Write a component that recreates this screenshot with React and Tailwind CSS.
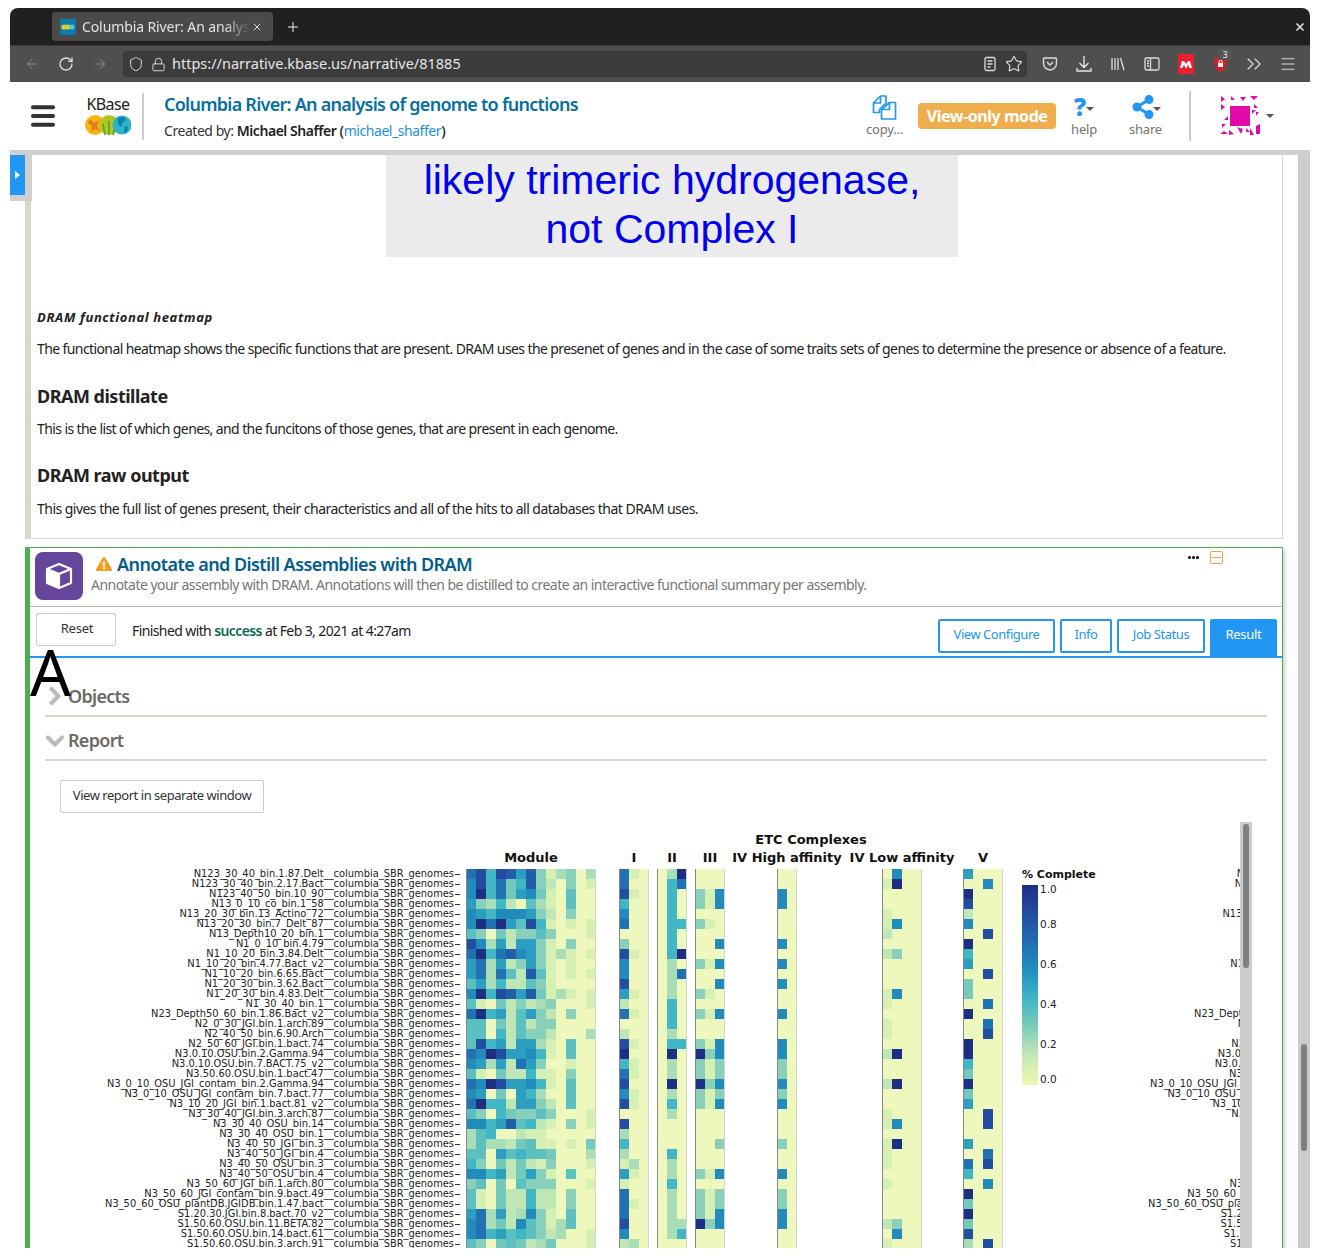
import React from 'react';
import { ArrowLeft, ArrowRight, RotateCw, Shield, Lock, Star, Plus, X, Menu, ChevronsRight, ChevronRight, ChevronDown } from 'lucide-react';
import { FaShareAlt, FaExclamationTriangle } from 'react-icons/fa';

const PALETTE = {
  a: '#eef8bd', b: '#d6efb3', c: '#bfe6b5', d: '#a8ddb5', e: '#88d0ba', f: '#74c9bd', g: '#5cc0c0',
  h: '#41b6c4', i: '#2c9fc0', j: '#218bbb', k: '#2072b2', l: '#225ea8', m: '#234da0', n: '#1d2e83',
};

const LABELS = [
  'N123_30_40_bin.1.87.Delt', 'N123_30_40_bin.2.17.Bact', 'N123_40_50_bin.10_90', 'N13_0_10_co_bin.1_58',
  'N13_20_30_bin.13_Actino_72', 'N13_20_30_bin.7_Delt_87', 'N13_Depth10_20_bin.1', 'N1_0_10_bin.4.79',
  'N1_10_20_bin.3.84.Delt', 'N1_10_20_bin.4.77.Bact_v2', 'N1_10_20_bin.6.65.Bact', 'N1_20_30_bin.3.62.Bact',
  'N1_20_30_bin.4.83.Delt', 'N1_30_40_bin.1', 'N23_Depth50_60_bin.1.86.Bact_v2', 'N2_0_30_JGI.bin.1.arch.89',
  'N2_40_50_bin.6.90.Arch', 'N2_50_60_JGI.bin.1.bact.74', 'N3.0.10.OSU.bin.2.Gamma.94', 'N3.0.10.OSU.bin.7.BACT.75_v2',
  'N3.50.60.OSU.bin.1.bact.47', 'N3_0_10_OSU_JGI_contam_bin.2.Gamma.94', 'N3_0_10_OSU_JGI_contam_bin.7.bact.77',
  'N3_10_20_JGI_bin.1.bact.81_v2', 'N3_30_40_JGI.bin.3.arch.87', 'N3_30_40_OSU_bin.14', 'N3_30_40_OSU_bin.1',
  'N3_40_50_JGI_bin.3', 'N3_40_50_JGI_bin.4', 'N3_40_50_OSU_bin.3', 'N3_40_50_OSU_bin.4', 'N3_50_60_JGI_bin.1.arch.80',
  'N3_50_60_JGI_contam_bin.9.bact.49', 'N3_50_60_OSU_plantDB.JGIDB.bin.1.47.bact', 'S1.20.30.JGI.bin.8.bact.70_v2',
  'S1.50.60.OSU.bin.11.BETA.82', 'S1.50.60.OSU.bin.14.bact.61', 'S1.50.60.OSU.bin.3.arch.91',
];

const MODULE = [
  'kmhmlilebdead', 'jmhkfhlecaeab', 'jnhkfijfbagaa', 'iedhcagdbagaa', 'jihjjjiecaeaa', 'jnknigmhbabab',
  'geafceegeaaab', 'mjdiciiebaeaa', 'knhkljiebdbab', 'ikdiceiebabaa', 'ikdkgclgbabab',
  'gidhccgebaaaa', 'jnhmlilfbdbab', 'gbafcecdeaaab', 'knhicgiecaeaa', 'ggafcgceeaaaa', 'ggahcgeecaaad',
  'gmhiciidbagaa', 'kjnmiijhbagaa', 'jidickieaabaa', 'gbafcchbbaeaa', 'kjnmiijhbagaa', 'jiafaihdaagaa',
  'knhhciiecagaa', 'geahfeegeaaab', 'jjhilghcbaeab', 'dghaacbbaaaaa', 'dgddcfgbbabaf', 'ggaighggfaaad',
  'heafcfcbeaaab', 'jjhicfiebagaa', 'egafageeeaaab', 'gbafcchccaeaa', 'gbafcchccaeaa', 'ikdicdjebagaa',
  'jkdfcjgebdgaa', 'jkhighgecdaab', 'geafgfcdfaaab',
];
const COMPLEX_I = ['kba', 'kaa', 'mba', 'haa', 'jaa', 'kaa', 'aaa', 'eaa', 'mba', 'jaa', 'jaa', 'maa', 'iba', 'caa', 'kba', 'aaa', 'caa', 'mba', 'naa', 'hba', 'kba', 'maa', 'jba', 'mba', 'aaa', 'maa', 'daa', 'haa', 'daa', 'bda', 'iba', 'baa', 'kaa', 'kba', 'kaa', 'maa', 'jaa', 'cda'];
const COMPLEX_II = ['adn', 'ahk', 'aha', 'aha', 'aha', 'ahh', 'aha', 'aha', 'ahn', 'ada', 'adk', 'ada', 'ada', 'aha', 'aha', 'aha', 'ada', 'ahh', 'ana', 'ada', 'ada', 'ana', 'ada', 'aha', 'ada', 'aaa', 'aaa', 'aaa', 'aha', 'ada', 'ada', 'aha', 'ada', 'ada', 'ada', 'add', 'adh', 'aaa'];
const COMPLEX_III = ['aaa', 'aaa', 'ebj', 'ebj', 'aaa', 'eba', 'aaa', 'aaj', 'aaa', 'ebj', 'aaa', 'aaj', 'eba', 'aaa', 'ebj', 'aaa', 'aaa', 'ebj', 'nej', 'ebe', 'ebe', 'nej', 'ebe', 'ebj', 'aaa', 'aaa', 'aaa', 'aae', 'aaa', 'aaa', 'ebj', 'aaa', 'ebe', 'ebe', 'ebj', 'nej', 'aaa', 'aaa'];
const IV_HIGH = ['aa', 'aa', 'ja', 'ja', 'aa', 'aa', 'aa', 'ja', 'aa', 'ja', 'aa', 'ja', 'aa', 'aa', 'ja', 'aa', 'aa', 'ja', 'ja', 'ea', 'ea', 'ja', 'ea', 'ja', 'aa', 'aa', 'aa', 'ea', 'aa', 'aa', 'ja', 'aa', 'ea', 'ea', 'ja', 'ja', 'aa', 'aa'];
const IV_LOW = ['ajaa', 'bnaa', 'aaaa', 'aaaa', 'baaa', 'bjaa', 'caaa', 'aaaa', 'ceaa', 'aaaa', 'aaaa', 'aaaa', 'bjaa', 'baaa', 'aaaa', 'baaa', 'baaa', 'aaaa', 'cnaa', 'aaaa', 'aaaa', 'cnaa', 'aaaa', 'aaaa', 'baaa', 'bjaa', 'aaaa', 'bnaa', 'baaa', 'baaa', 'aaaa', 'baaa', 'aaaa', 'aaaa', 'aaaa', 'ceaa', 'ajaa', 'baaa'];
const COMPLEX_V = ['iaaa', 'aaja', 'naaa', 'maaa', 'caaa', 'jaaa', 'aama', 'naaa', 'haaa', 'iaaa', 'aama', 'faaa', 'faaa', 'aaka', 'naaa', 'aaka', 'aama', 'naaa', 'naaa', 'haaa', 'faaa', 'naaa', 'faaa', 'iaaa', 'aama', 'aama', 'aaaa', 'iaaa', 'aaka', 'kama', 'haaa', 'aaja', 'naaa', 'faaa', 'naaa', 'faaa', 'maaa', 'dama'];

// one block of the heatmap, a drawing of coloured cells with its title above
const HeatBlock = ({ title, rows }) => {
  const cols = rows[0].length;
  return (
    <div className="flex flex-col items-center shrink-0">
      <div className="h-[14px] w-0 flex justify-center items-center whitespace-nowrap text-[13px] font-bold leading-none text-[#111] mb-[5px]">{title}</div>
      <svg width={cols * 10} height={380} className="block shrink-0" shapeRendering="crispEdges">
        {rows.map((row, y) =>
          row.split('').map((c, x) => <rect key={x + '-' + y} x={x * 10} y={y * 10} width={10} height={10} fill={PALETTE[c]} />)
        )}
        <rect x={0} y={0} width={1} height={380} fill="#888888" />
        <rect x={cols * 10 - 1} y={0} width={1} height={380} fill="#d4d4d4" />
      </svg>
    </div>
  );
};

const LabelColumn = () => (
  <div className="w-[415px] shrink-0 flex flex-col items-end pt-[47px] text-[9.9px] leading-[10px] text-[#222]">
    {LABELS.map((l) => (
      <div key={l} className="h-[10px] flex items-center whitespace-nowrap">
        <span>{l}__columbia_SBR_genomes</span>
        <span className="ml-[1px] w-[5px] h-px bg-[#333] shrink-0" />
      </div>
    ))}
  </div>
);

const ColorBar = () => (
  <div className="w-[66px] shrink-0 pt-[47px] ml-[19px]">
    <div className="text-[11px] font-bold leading-[12px] text-[#111] whitespace-nowrap">% Complete</div>
    <div className="flex mt-[4px]">
      <div className="w-[16px] h-[200px] bg-[linear-gradient(to_bottom,#1f2f86,#234da0,#216daf,#2091c0,#41b6c4,#7fcdbb,#c7e9b4,#edf8b1)]" />
      <div className="ml-[2px] -mt-[2px] text-[10.5px] leading-[12px] text-[#222] flex flex-col">
        <span className="h-[12px]">1.0</span>
        <span className="h-[12px] mt-[23px]">0.8</span>
        <span className="h-[12px] mt-[28px]">0.6</span>
        <span className="h-[12px] mt-[28px]">0.4</span>
        <span className="h-[12px] mt-[28px]">0.2</span>
        <span className="h-[12px] mt-[23px]">0.0</span>
      </div>
    </div>
  </div>
);

const Heatmap = () => (
  <div className="flex font-['DejaVu_Sans',sans-serif] w-[1195px] overflow-hidden">
    <div className="flex shrink-0">
      <LabelColumn />
      <div className="flex shrink-0 pt-[22px]">
        <div className="ml-[6px] pt-[6px]"><HeatBlock title="Module" rows={MODULE} /></div>
        <div className="ml-[23px] pt-[6px]"><HeatBlock title="I" rows={COMPLEX_I} /></div>
        <div className="ml-[8px] pt-[6px]"><HeatBlock title="II" rows={COMPLEX_II} /></div>
        <div className="ml-[8px] pt-[6px]"><HeatBlock title="III" rows={COMPLEX_III} /></div>
        <div className="ml-[52px] pt-[6px] relative">
          <div className="absolute left-[10px] -top-[11px] w-0 flex justify-center whitespace-nowrap text-[13px] font-bold text-[#111] leading-[14px]">
            <span className="pl-[48px]">ETC Complexes</span>
          </div>
          <HeatBlock title="IV High affinity" rows={IV_HIGH} />
        </div>
        <div className="ml-[85px] pt-[6px]"><HeatBlock title="IV Low affinity" rows={IV_LOW} /></div>
        <div className="ml-[41px] pt-[6px]"><HeatBlock title="V" rows={COMPLEX_V} /></div>
      </div>
      <ColorBar />
    </div>
    <LabelColumn />
  </div>
);

const ChromeIcon = ({ children }) => <div className="w-[16px] h-[16px] flex items-center justify-center text-[#ddd]">{children}</div>;

const BrowserChrome = () => (
  <div className="shrink-0 font-['Noto_Sans',sans-serif]">
    <div className="h-[37px] bg-[#202020] flex items-start relative">
      <div className="ml-[42px] mt-[4px] w-[221px] h-[29px] bg-[#4a4a4a] rounded-[4px] flex items-center pl-[8px]">
        <svg width="16" height="16" viewBox="0 0 16 16" className="shrink-0">
          <rect width="16" height="16" fill="#0a7ab0" />
          <circle cx="4" cy="8" r="2.6" fill="#f9c513" />
          <circle cx="8" cy="8" r="2.6" fill="#c7d536" />
          <circle cx="12" cy="8" r="2.6" fill="#5cc0d0" />
        </svg>
        <span className="ml-[6px] text-[14px] text-[#e2e2e2] w-[168px] overflow-hidden whitespace-nowrap tracking-[-0.1px] [mask-image:linear-gradient(to_right,black_85%,transparent)]">Columbia River: An analysis of genome</span>
        <X size={12} className="text-[#ddd] ml-[1px]" />
      </div>
      <Plus size={16} className="text-[#eee] ml-[12px] mt-[11px]" strokeWidth={1.5} />
      <X size={12} strokeWidth={3.5} className="text-[#ddd] ml-auto mr-[4px] mt-[13px]" />
    </div>
    <div className="h-[37px] bg-[#4f4f4f] border-t border-[#3a3a3a] flex items-center text-[#ddd]">
      <ArrowLeft size={16} strokeWidth={1.5} className="ml-[14px] text-[#8c8c8c]" />
      <RotateCw size={16} strokeWidth={2} className="ml-[18px]" />
      <ArrowRight size={16} strokeWidth={1.5} className="ml-[18px] text-[#8c8c8c]" />
      <div className="ml-[15px] w-[904px] h-[26px] bg-[#3c3c3c] rounded-[4px] flex items-center pl-[5px]">
        <Shield size={16} strokeWidth={1.5} />
        <Lock size={15} strokeWidth={1.5} className="ml-[7px]" />
        <span className="ml-[6px] text-[14.5px] text-[#e6e6e6]">https://narrative.kbase.us/narrative/81885</span>
        <div className="ml-auto mr-[4px] flex items-center gap-[8px]">
          <svg width="14" height="16" viewBox="0 0 14 16" fill="none" stroke="#ddd" strokeWidth="1.3">
            <rect x="2" y="1.5" width="10" height="13" rx="1.5" />
            <path d="M4.5 5h5M4.5 8h5M4.5 11h3" />
          </svg>
          <Star size={18} strokeWidth={1.5} />
        </div>
      </div>
      <div className="ml-[15px] flex items-center gap-[18px]">
        <ChromeIcon>
          <svg width="16" height="16" viewBox="0 0 16 16" fill="none" stroke="#ddd" strokeWidth="1.4">
            <path d="M2.5 2h11a1 1 0 0 1 1 1v4.5a6.5 6.5 0 0 1-13 0V3a1 1 0 0 1 1-1z" />
            <path d="M5 6l3 3 3-3" />
          </svg>
        </ChromeIcon>
        <ChromeIcon>
          <svg width="16" height="18" viewBox="0 0 16 18" fill="none" stroke="#e4e4e4" strokeWidth="1.4" className="shrink-0">
            <path d="M8 1v11M3.500 8L8 12.500 12.500 8M1 13v3h14v-3" />
          </svg>
        </ChromeIcon>
        <ChromeIcon>
          <svg width="16" height="16" viewBox="0 0 16 16" fill="none" stroke="#ddd" strokeWidth="1.3">
            <path d="M2 2v12M5 2v12M8 2v12M10.5 2l3.5 12" />
          </svg>
        </ChromeIcon>
        <ChromeIcon>
          <svg width="16" height="16" viewBox="0 0 16 16" fill="none" stroke="#ddd" strokeWidth="1.3">
            <rect x="1" y="2" width="14" height="12" rx="1.5" />
            <path d="M6.5 2v12M3 5h2M3 7.5h2M3 10h2" />
          </svg>
        </ChromeIcon>
        <div className="w-[16px] h-[20px] bg-[#e8202e] flex items-center justify-center shrink-0">
          <svg width="12" height="8" viewBox="0 0 12 8" fill="#fff">
            <path d="M0 8l2-7h2l2 3 2-3h2l2 7h-2.500L8 4.500 6.500 8h-1L4 4.500 2.500 8z" />
          </svg>
        </div>
        <div className="w-[16px] h-[16px] relative flex items-center justify-center">
          <svg width="15" height="17" viewBox="0 0 15 17" className="shrink-0">
            <path d="M7.500 0.500L14 2.500c0 6-1.500 10.500-6.500 14C2.500 13 1 8.500 1 2.500z" fill="#d81e28" />
            <rect x="5" y="7" width="5" height="4" fill="#fff" />
            <path d="M6 7V5.500a1.500 1.500 0 0 1 3 0V7" fill="none" stroke="#fff" />
          </svg>
          <span className="absolute left-[6px] -top-[7px] w-[14px] h-[11px] rounded-[2px] bg-[#555] text-[9px] leading-[11px] text-center text-[#eee]">3</span>
        </div>
        <ChromeIcon><ChevronsRight size={24} strokeWidth={1.2} className="shrink-0" /></ChromeIcon>
        <ChromeIcon><Menu size={18} strokeWidth={1.5} className="shrink-0" /></ChromeIcon>
      </div>
    </div>
  </div>
);

const Identicon = () => (
  <svg width="42" height="40" viewBox="0 0 42 40" fill="#e20aa8" className="shrink-0">
    <rect x="10" y="10" width="20" height="20" />
    <path d="M1 0l4 3-4 3zM1 8l4 3-4 3zM11 0l4 4h-4zM20 1l6 0-3 4zM30 0h8l-4 4zM34 8l4 4h-4zM36 16l3 0-3 4zM32 14l4 0-4 4zM8 20l-4 4 4 0zM2 28l4 0-4 4zM0 38l8 0-4-3zM9 34l5 4-5 1zM17 31l6 2-2 5zM30 32l4 7-4 0zM26 32l4 4-4 0zM36 30l4-2 0 10-4 0z" />
  </svg>
);

const KBaseLogo = () => (
  <div className="flex flex-col items-center w-[46px]">
    <div className="font-['Noto_Sans',sans-serif] text-[16px] leading-[18px] text-[#222] tracking-[-0.6px]">KBase</div>
    <svg width="46" height="24" viewBox="0 0 46 24">
      <circle cx="10" cy="12" r="10" fill="#f9b60f" />
      <path d="M5 6l4 4 5-3-2 6 3 5-5-2-4 3 1-6-4-3z" fill="#e5791c" />
      <circle cx="24" cy="12" r="10" fill="#b4c61e" />
      <path d="M24 22V8M20 22l-2-11M28 22l3-12" stroke="#4f9e3a" strokeWidth="1.5" fill="none" />
      <circle cx="37" cy="12" r="9.500" fill="#2cb2c9" />
      <path d="M33 5l6-1 2 3-4 3-1 4-3-3zM40 13l3 1-1 5-3 1z" fill="#0d7fa6" />
    </svg>
  </div>
);

const HeaderAction = ({ icon, label }) => (
  <div className="flex flex-col items-center pb-[2px]">
    <div className="h-[28px] flex items-center">{icon}</div>
    <div className="text-[13px] leading-[16px] text-[#77726c] tracking-[-0.2px]">{label}</div>
  </div>
);

const Caret = () => <div className="w-0 h-0 border-x-[4px] border-x-transparent border-t-[4px] border-t-[#555]" />;

const AppHeader = () => (
  <div className="h-[68px] shrink-0 bg-white flex items-center font-['Noto_Sans',sans-serif] relative">
    <Menu size={30} strokeWidth={3.2} className="ml-[18px] text-[#333] shrink-0" />
    <div className="ml-[27px]"><KBaseLogo /></div>
    <div className="ml-[11px] w-[2px] h-[47px] bg-[#ccc]" />
    <div className="ml-[20px] flex flex-col">
      <div className="text-[18px] font-semibold leading-[24px] text-[#066f9f] tracking-[-0.74px]">Columbia River: An analysis of genome to functions</div>
      <div className="text-[14px] leading-[20px] mt-[5px] text-[#333] tracking-[-0.45px]">
        Created by: <span className="font-semibold text-[#222]">Michael Shaffer</span> <span className="font-semibold">(</span><span className="text-[#1a8fdd]">michael_shaffer</span><span className="font-semibold">)</span>
      </div>
    </div>
    <div className="ml-auto flex items-center mr-[36px]">
      <HeaderAction
        label="copy..."
        icon={
          <svg width="25" height="25" viewBox="0 0 24 25" fill="none" stroke="#2196f3" strokeWidth="1.7" strokeLinejoin="round">
            <path d="M8 1H13.500V8L7 14.500V17.500H1V8z" />
            <path d="M8 1V8H1" />
            <path d="M17 7.500H23V24H9V14.500z" />
            <path d="M17 7.500V14.500H9" />
          </svg>
        }
      />
      <div className="ml-[15px] w-[138px] h-[26px] rounded-[4px] bg-[#f0ad4e] text-white font-bold text-[16px] tracking-[-0.45px] flex items-center justify-center">View-only mode</div>
      <div className="ml-[15px]">
        <HeaderAction
          label="help"
          icon={
            <span className="flex items-center">
              <span className="text-[#2196f3] font-black text-[24px] leading-none">?</span>
              <span className="mt-[4px] flex"><Caret /></span>
            </span>
          }
        />
      </div>
      <div className="ml-[32px]">
        <HeaderAction
          label="share"
          icon={
            <span className="flex items-center">
              <FaShareAlt size={24} className="text-[#2196f3]" />
              <span className="-ml-[2px] mt-[3px] flex"><Caret /></span>
            </span>
          }
        />
      </div>
      <div className="ml-[27px] w-[2px] h-[50px] bg-[#ccc]" />
      <div className="ml-[29px] flex items-center gap-[4px]">
        <Identicon />
        <Caret />
      </div>
    </div>
  </div>
);

const MarkdownCell = () => (
  <div className="w-[1258px] ml-[15px] h-[384px] border-r border-b border-[#dcd6cc] border-l-[6px] border-l-[#dcd6cc] pl-[6px] pr-[4px] shrink-0 text-[#222] font-['Noto_Sans',sans-serif]">
    <div className="w-[572px] h-[102px] ml-[349px] bg-[#ebebeb] text-[#0000ee] text-center font-['Liberation_Sans',sans-serif] text-[41px] leading-[49px] pt-[1px]">
      <div>likely trimeric hydrogenase,</div>
      <div>not Complex I</div>
    </div>
    <div className="mt-[52px] font-bold italic text-[13px] leading-[16px] tracking-[0.62px]">DRAM functional heatmap</div>
    <p className="mt-[14px] text-[14px] leading-[20px] tracking-[-0.6px]">The functional heatmap shows the specific functions that are present. DRAM uses the presenet of genes and in the case of some traits sets of genes to determine the presence or absence of a feature.</p>
    <h3 className="mt-[25px] font-bold text-[18px] leading-[24px] tracking-[-0.5px]">DRAM distillate</h3>
    <p className="mt-[11px] text-[14px] leading-[20px] tracking-[-0.6px]">This is the list of which genes, and the funcitons of those genes, that are present in each genome.</p>
    <h3 className="mt-[24px] font-bold text-[18px] leading-[24px] tracking-[-0.5px]">DRAM raw output</h3>
    <p className="mt-[12px] text-[14px] leading-[20px] tracking-[-0.53px]">This gives the full list of genes present, their characteristics and all of the hits to all databases that DRAM uses.</p>
  </div>
);

const TabButton = ({ children, w }) => (
  <div className={`h-[34px] pb-[2px] border-2 border-[#2196f3] rounded-[2px] text-[#2196f3] text-[13px] flex items-center justify-center tracking-[-0.45px] ${w}`}>{children}</div>
);

const AppCell = () => (
  <div className="w-[1258px] ml-[15px] mt-[8px] border border-[#4caf50] border-l-[5px] shrink-0 font-['Noto_Sans',sans-serif] shadow-[2px_2px_4px_rgba(0,0,0,0.2)] relative h-[760px] overflow-hidden">
    <div className="h-[59px] flex border-b border-[#bbb] relative">
      <div className="ml-[5px] mt-[4px] w-[48px] h-[48px] bg-[#65469b] rounded-[8px] flex items-center justify-center shrink-0">
        <svg width="28" height="28" viewBox="0 0 28 28" fill="none" stroke="#fff" strokeWidth="2.2" strokeLinejoin="round">
          <path d="M2 7l12 5v14L2 21z" fill="#fff" stroke="none" />
          <path d="M14 2l12 5v14l-12 5-12-5V7z" />
          <path d="M2 7l12 5 12-5M14 12v14" />
        </svg>
      </div>
      <div className="ml-[13px] mt-[3px]">
        <div className="flex items-center">
          <FaExclamationTriangle size={16} className="text-[#f89c1c]" />
          <span className="ml-[5px] text-[18px] font-semibold leading-[26px] text-[#035c8a] tracking-[-0.585px]">Annotate and Distill Assemblies with DRAM</span>
        </div>
        <div className="-ml-[5px] text-[14px] leading-[16px] text-[#7a7670] tracking-[-0.53px]">Annotate your assembly with DRAM. Annotations will then be distilled to create an interactive functional summary per assembly.</div>
      </div>
      <div className="absolute left-[1158px] top-[3px] flex items-center">
        <span className="flex gap-[1px]">
          <span className="w-[3px] h-[3px] bg-black rounded-full" />
          <span className="w-[3px] h-[3px] bg-black rounded-full" />
          <span className="w-[3px] h-[3px] bg-black rounded-full" />
        </span>
        <span className="ml-[11px] w-[13px] h-[13px] border border-[#f0a040] rounded-[2px] flex items-center justify-center">
          <span className="w-[9px] h-px bg-[#f0a040]" />
        </span>
      </div>
    </div>
    <div className="h-[51px] flex border-b-2 border-[#2196f3]">
      <div className="ml-[6px] mt-[6px] w-[80px] h-[33px] pb-[2px] pl-[2px] border border-[#ccc] rounded-[2px] text-[13px] text-[#333] flex items-center justify-center tracking-[-0.2px]">Reset</div>
      <div className="ml-[16px] mt-[14px] text-[14px] leading-[20px] text-[#222] tracking-[-0.6px]">
        Finished with <span className="text-[#0d6b55] font-semibold">success</span> at Feb 3, 2021 at 4:27am
      </div>
      <div className="ml-auto flex items-start mt-[12px] gap-[5px] mr-[5px]">
        <TabButton w="w-[117px]">View Configure</TabButton>
        <TabButton w="w-[52px]">Info</TabButton>
        <TabButton w="w-[88px]">Job Status</TabButton>
        <div className="w-[67px] h-[37px] pb-[5px] bg-[#2196f3] rounded-t-[2px] text-white text-[13px] flex items-center justify-center tracking-[-0.3px]">Result</div>
      </div>
    </div>
    <div className="absolute left-0 top-[92px] text-[64px] leading-[64px] text-black font-['Noto_Sans',sans-serif] pointer-events-none">A</div>
    <div className="ml-[15px] mr-[15px]">
      <div className="h-[59px] flex items-end pb-[7px] border-b-2 border-[#dcd6cc]">
        <ChevronRight size={28} strokeWidth={3.5} className="-ml-[4px] -mb-[2px] text-[#bbb] shrink-0" />
        <span className="-ml-[1px] text-[18px] leading-[24px] font-semibold text-[#6d6a65] tracking-[-0.7px]">Objects</span>
      </div>
      <div className="h-[44px] flex items-end pb-[7px] border-b-2 border-[#dcd6cc]">
        <ChevronDown size={28} strokeWidth={3.5} className="-mb-[3px] -ml-[4px] text-[#bbb] shrink-0" />
        <span className="-ml-[1px] text-[18px] leading-[24px] font-semibold text-[#6d6a65] tracking-[-0.7px]">Report</span>
      </div>
    </div>
    <div className="ml-[30px] mt-[19px] w-[204px] h-[33px] pb-[1px] border border-[#ccc] rounded-[2px] text-[13px] text-[#333] flex items-center justify-center tracking-[-0.47px]">View report in separate window</div>
    <div className="ml-[15px] mt-[9px] flex">
      <Heatmap />
      <div className="w-[12px] h-[430px] bg-[#ccc] shrink-0 pl-[3px] pt-[2px]">
        <div className="w-[6px] h-[144px] rounded-full bg-[#808080]" />
      </div>
    </div>
  </div>
);

export default function App() {
  return (
    <div className="w-[1320px] h-[1258px] bg-white pt-[8px] pb-[10px] px-[10px] overflow-hidden">
      <div className="w-[1300px] h-[1240px] rounded-t-[8px] overflow-hidden flex flex-col">
        <BrowserChrome />
        <AppHeader />
        <div className="h-[5px] bg-[#cfcfcf] shrink-0" />
        <div className="flex-1 min-h-0 flex relative">
          <div className="absolute left-0 top-0 h-[46px] w-[22px] bg-[#cfcfcf]">
            <div className="w-[15px] h-[40px] bg-[#2196f3] flex items-center justify-center">
              <span className="w-0 h-0 border-y-[4px] border-y-transparent border-l-[5px] border-l-white" />
            </div>
          </div>
          <div className="flex-1 min-w-0 flex flex-col overflow-hidden">
            <MarkdownCell />
            <AppCell />
          </div>
          <div className="w-[12px] shrink-0 bg-[#ccc] pl-[3px] pt-[889px]">
            <div className="w-[6px] h-[107px] rounded-full bg-[#808080]" />
          </div>
        </div>
      </div>
    </div>
  );
}
